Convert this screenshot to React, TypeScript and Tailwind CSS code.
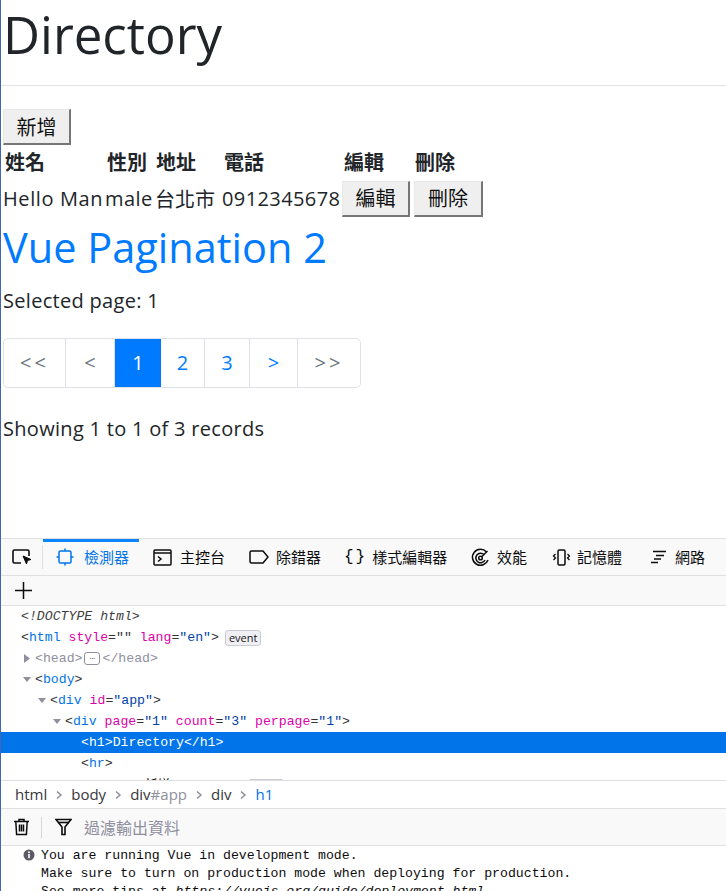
import React from "react";

const sans = "'Open Sans', 'Noto Sans CJK TC', sans-serif";
const cjk = "'Noto Sans CJK TC', 'Open Sans', sans-serif";
const mono = "'Liberation Mono', 'DejaVu Sans Mono', monospace";

function Btn({ children, w }: { children: React.ReactNode; w: string }) {
  return (
    <button
      className={`h-[36px] ${w} bg-[#efefef] border border-t-[#e8e8e8] border-l-[#e8e8e8] border-r-[#767676] border-b-[#767676] border-r-2 border-b-2 text-[20px] text-[#111] flex items-center justify-center leading-none`}
      style={{ fontFamily: cjk }}
    >
      {children}
    </button>
  );
}

function Tri({ open }: { open: boolean }) {
  return (
    <span className="inline-block w-[14px] h-[21px] align-top">
      <svg width="14" height="21" viewBox="0 0 14 21">
        {open ? (
          <path d="M2 8 L10 8 L6 13 Z" fill="#8f8f9d" />
        ) : (
          <path d="M3 6 L9 10.5 L3 15 Z" fill="#8f8f9d" />
        )}
      </svg>
    </span>
  );
}

const B = ({ c }: { c: string }) => <span className="text-[#333]">{c}</span>;
const T = ({ c }: { c: string }) => <span className="text-[#0074e8]">{c}</span>;
const A = ({ c }: { c: string }) => <span className="text-[#dd00a9]">{c}</span>;
const V = ({ c }: { c: string }) => <span className="text-[#003eaa]">{c}</span>;

function Line({ indent, children, sel }: { indent: number; children: React.ReactNode; sel?: boolean }) {
  return (
    <div
      className={`h-[21px] leading-[21px] whitespace-pre ${sel ? "bg-[#0074e8] text-white" : ""}`}
      style={{ paddingLeft: indent }}
    >
      {children}
    </div>
  );
}

function Badge({ children }: { children: React.ReactNode }) {
  return (
    <span
      className="ml-[6px] px-[3px] h-[16px] leading-[14px] inline-block align-middle border border-[#cacad1] rounded-[3px] bg-[#f0f0f4] text-[11px] text-[#15141a]"
      style={{ fontFamily: sans }}
    >
      {children}
    </span>
  );
}

export default function App() {
  return (
    <div className="w-[726px] h-[891px] overflow-hidden bg-white border-l border-[#4267b2] flex flex-col">
      {/* Page */}
      <div className="h-[538px] shrink-0 pl-[2px] text-[#212529]" style={{ fontFamily: sans }}>
        <div className="h-[68px] flex items-center text-[51px] leading-none">Directory</div>
        <div className="h-[17px]" />
        <div className="-ml-[2px] h-px bg-[#e3e3e3]" />
        <div className="h-[23px]" />
        <Btn w="w-[68px]">新增</Btn>
        <div className="flex h-[34px] items-center font-bold text-[20px]" style={{ fontFamily: cjk }}>
          <div className="w-[102px] pl-[2px]">姓名</div>
          <div className="w-[50px] pl-[2px]">性別</div>
          <div className="w-[67px] pl-[1px]">地址</div>
          <div className="w-[120px] pl-[2px]">電話</div>
          <div className="w-[72px] pl-[2px]">編輯</div>
          <div className="w-[72px] pl-[1px]">刪除</div>
        </div>
        <div className="flex h-[39px] items-center text-[20px] tracking-[0.4px]" style={{ fontFamily: sans }}>
          <div className="w-[102px] tracking-[0.6px]">Hello Man</div>
          <div className="w-[50px]">male</div>
          <div className="w-[67px] tracking-normal" style={{ fontFamily: cjk }}>台北市</div>
          <div className="w-[120px]">0912345678</div>
          <div className="w-[72px] tracking-normal"><Btn w="w-[68px]">編輯</Btn></div>
          <div className="w-[72px] tracking-normal"><Btn w="w-[69px]">刪除</Btn></div>
        </div>
        <div className="h-[58px] pt-[1px] flex items-center text-[41.5px] text-[#007bff] leading-none">Vue Pagination 2</div>
        <div className="h-[54px] pb-[4px] flex items-center text-[20px] tracking-[0.3px]">Selected page: 1</div>
        <div className="h-[8px]" />
        <div className="flex h-[50px] w-[358px] border border-[#dee2e6] rounded-[5px] overflow-hidden text-[20px] leading-none">
          <div className="w-[62px] flex items-center justify-center text-[#6c757d] border-r border-[#dee2e6] tracking-[3px]">&lt;&lt;</div>
          <div className="w-[49px] flex items-center justify-center text-[#6c757d] border-r border-[#dee2e6]">&lt;</div>
          <div className="w-[46px] flex items-center justify-center bg-[#007bff] text-white">1</div>
          <div className="w-[44px] flex items-center justify-center text-[#007bff] border-r border-[#dee2e6]">2</div>
          <div className="w-[45px] flex items-center justify-center text-[#007bff] border-r border-[#dee2e6]">3</div>
          <div className="w-[48px] flex items-center justify-center text-[#007bff] border-r border-[#dee2e6]">&gt;</div>
          <div className="flex-1 flex items-center justify-center text-[#6c757d] tracking-[3px]">&gt;&gt;</div>
        </div>
        <div className="h-[81px] flex items-center text-[20px] tracking-[0.3px]">Showing 1 to 1 of 3 records</div>
      </div>

      {/* Devtools */}
      <div className="flex-1 flex flex-col border-t border-[#e0e0e2] text-[#0c0c0d]">
        {/* Tab bar */}
        <div className="h-[37px] bg-[#f9f9fa] border-b border-[#e0e0e2] flex items-stretch text-[15px] whitespace-nowrap" style={{ fontFamily: cjk }}>
          <div className="w-[41px] shrink-0 flex items-center justify-center">
            <svg width="22" height="20" viewBox="0 0 22 20" fill="none" stroke="#0c0c0d" strokeWidth="1.6">
              <path d="M10 16 H3.5 a1.5 1.5 0 0 1 -1.5 -1.5 V4.5 a1.5 1.5 0 0 1 1.5 -1.5 H16.5 a1.5 1.5 0 0 1 1.5 1.5 V9" />
              <path d="M12 9 L20 12.5 L16.5 13.5 L15.5 17 Z" fill="#0c0c0d" strokeWidth="1" />
            </svg>
          </div>
          <div className="w-px shrink-0 my-[6px] bg-[#e0e0e2]" />
          <div className="relative w-[96px] shrink-0 flex items-center pl-[13px] gap-[10px] text-[#0074e8]">
            <div className="absolute top-0 left-0 right-0 h-[3px] bg-[#0a84ff]" />
            <svg width="18" height="18" viewBox="0 0 18 18" fill="none" stroke="#0074e8" strokeWidth="1.5">
              <rect x="3" y="3" width="12" height="12" rx="1.5" />
              <path d="M9 0.5 V3 M9 15 V17.5 M0.5 9 H3 M15 9 H17.5" />
            </svg>
            <span>檢測器</span>
          </div>
          <div className="w-[96px] shrink-0 flex items-center pl-[14px] gap-[8px]">
            <svg width="19" height="17" viewBox="0 0 19 17" fill="none" stroke="#0c0c0d" strokeWidth="1.5">
              <rect x="1" y="1" width="17" height="15" rx="1" />
              <path d="M1 4 H18" />
              <path d="M5 7.5 L8 10 L5 12.5" />
            </svg>
            <span>主控台</span>
          </div>
          <div className="w-[96px] shrink-0 flex items-center pl-[14px] gap-[7px]">
            <svg width="20" height="14" viewBox="0 0 20 14" fill="none" stroke="#0c0c0d" strokeWidth="1.5">
              <path d="M2.5 1 H14 L19 7 L14 13 H2.5 a1.5 1.5 0 0 1 -1.5 -1.5 V2.5 a1.5 1.5 0 0 1 1.5 -1.5 Z" />
            </svg>
            <span>除錯器</span>
          </div>
          <div className="w-[126px] shrink-0 flex items-center pl-[13px] gap-[5px]">
            <span className="text-[16px] tracking-[2px]" style={{ fontFamily: mono }}>{"{}"}</span>
            <span>樣式編輯器</span>
          </div>
          <div className="w-[82px] shrink-0 flex items-center pl-[14px] gap-[7px]">
            <svg width="19" height="19" viewBox="0 0 19 19" fill="none" stroke="#0c0c0d" strokeWidth="1.5">
              <path d="M15.5 4 A8 8 0 1 0 17 12" />
              <path d="M13 6.5 A4.8 4.8 0 1 0 14 12" />
              <circle cx="9.5" cy="10" r="1.8" />
              <path d="M11 8.5 L16.5 3" />
            </svg>
            <span>效能</span>
          </div>
          <div className="w-[97px] shrink-0 flex items-center pl-[13px] gap-[6px]">
            <svg width="19" height="17" viewBox="0 0 19 17" fill="none" stroke="#0c0c0d" strokeWidth="1.3">
              <rect x="6" y="1" width="7" height="15" rx="1.2" strokeWidth="1.5" />
              <path d="M3.5 5 L1.5 7 L3.5 9 L1.5 11 M15.5 5 L17.5 7 L15.5 9 L17.5 11" />
            </svg>
            <span>記憶體</span>
          </div>
          <div className="shrink-0 flex items-center pl-[14px] gap-[8px]">
            <svg width="17" height="14" viewBox="0 0 17 14" fill="none" stroke="#0c0c0d" strokeWidth="1.4">
              <path d="M3 1.5 H16 M6 5.5 H14 M4 9 H11 M1 12.5 H8" />
            </svg>
            <span>網路</span>
          </div>
        </div>
        {/* Second toolbar */}
        <div className="h-[30px] bg-[#f9f9fa] border-b border-[#e0e0e2] flex items-center pl-[13px]">
          <svg width="19" height="19" viewBox="0 0 19 19" stroke="#0c0c0d" strokeWidth="1.5">
            <path d="M9.5 1 V18 M1 9.5 H18" />
          </svg>
        </div>
        {/* Markup */}
        <div className="h-[174px] overflow-hidden text-[13.2px]" style={{ fontFamily: mono }}>
          <Line indent={20}><span className="italic text-[#3d3d3d]">{"<!DOCTYPE html>"}</span></Line>
          <Line indent={20}>
            <B c="<" /><T c="html" />{" "}<A c="style" /><B c={'=""'} />{" "}<A c="lang" /><B c="=" /><V c={'"en"'} /><B c=">" />
            <Badge>event</Badge>
          </Line>
          <Line indent={20}>
            <Tri open={false} />
            <span className="text-[#8f8f9d]">{"<head>"}</span>
            <span className="mx-[2px] w-[16px] h-[13px] inline-block align-middle text-center border border-[#8f8f9d] rounded-[3px] text-[9px] leading-[9px] text-[#555]">…</span>
            <span className="text-[#8f8f9d]">{"</head>"}</span>
          </Line>
          <Line indent={20}><Tri open /><B c="<" /><T c="body" /><B c=">" /></Line>
          <Line indent={35}><Tri open /><B c="<" /><T c="div" />{" "}<A c="id" /><B c="=" /><V c={'"app"'} /><B c=">" /></Line>
          <Line indent={50}>
            <Tri open /><B c="<" /><T c="div" />{" "}<A c="page" /><B c="=" /><V c={'"1"'} />{" "}<A c="count" /><B c="=" /><V c={'"3"'} />{" "}<A c="perpage" /><B c="=" /><V c={'"1"'} /><B c=">" />
          </Line>
          <Line indent={80} sel>{"<h1>Directory</h1>"}</Line>
          <Line indent={80}><B c="<" /><T c="hr" /><B c=">" /></Line>
          <Line indent={80}>
            <B c="<" /><T c="button" /><B c=">" /><span style={{ fontFamily: cjk }}>新增</span><B c="</" /><T c="button" /><B c=">" />
            <Badge>event</Badge>
          </Line>
        </div>
        {/* Breadcrumb */}
        <div className="h-[29px] border-t border-b border-[#e0e0e2] bg-white flex items-center pl-[14px] text-[15px] text-[#38383d]" style={{ fontFamily: sans }}>
          <span>html</span>
          <Chev />
          <span>body</span>
          <Chev />
          <span>div<span className="text-[#8f8f9d]">#app</span></span>
          <Chev />
          <span>div</span>
          <Chev />
          <span className="text-[#0074e8]">h1</span>
        </div>
        {/* Console toolbar */}
        <div className="h-[37px] bg-[#f9f9fa] border-b border-[#e0e0e2] flex items-center">
          <div className="w-[40px] flex items-center justify-center">
            <svg width="17" height="18" viewBox="0 0 17 18" fill="none" stroke="#0c0c0d" strokeWidth="1.5">
              <path d="M1 3.5 H16 M6 3.5 V1.5 H11 V3.5" />
              <path d="M2.8 3.5 L3.6 16.5 H13.4 L14.2 3.5" />
              <path d="M6.5 6.5 V13.5 M8.5 6.5 V13.5 M10.5 6.5 V13.5" />
            </svg>
          </div>
          <div className="w-px h-[21px] bg-[#d7d7db]" />
          <div className="w-[42px] flex items-center justify-center">
            <svg width="17" height="18" viewBox="0 0 17 18" fill="none" stroke="#0c0c0d" strokeWidth="1.6">
              <path d="M1 1.5 H16 L10 9 V16.5 H7 V9 Z" />
              <path d="M3 4.5 H14" />
            </svg>
          </div>
          <span className="text-[16px] text-[#8f8f9d]" style={{ fontFamily: cjk }}>過濾輸出資料</span>
        </div>
        {/* Console output */}
        <div className="flex pl-[22px] pt-[1px] text-[13.2px] leading-[18px] text-[#0c0c0d]" style={{ fontFamily: mono }}>
          <div className="w-[18px] pt-[2px]">
            <svg width="12" height="12" viewBox="0 0 12 12">
              <circle cx="6" cy="6" r="5.5" fill="#5b5b66" />
              <rect x="5.2" y="5" width="1.6" height="4.2" fill="#fff" />
              <circle cx="6" cy="3.3" r="0.95" fill="#fff" />
            </svg>
          </div>
          <div className="whitespace-pre">
            <div>You are running Vue in development mode.</div>
            <div>Make sure to turn on production mode when deploying for production.</div>
            <div>See more tips at <span className="italic">https://vuejs.org/guide/deployment.html</span></div>
          </div>
        </div>
      </div>
    </div>
  );
}

function Chev() {
  return (
    <span className="inline-flex w-[24px] justify-center">
      <svg width="8" height="10" viewBox="0 0 8 10" fill="none" stroke="#8f8f9d" strokeWidth="1.5">
        <path d="M2 1.5 L6 5 L2 8.5" />
      </svg>
    </span>
  );
}
